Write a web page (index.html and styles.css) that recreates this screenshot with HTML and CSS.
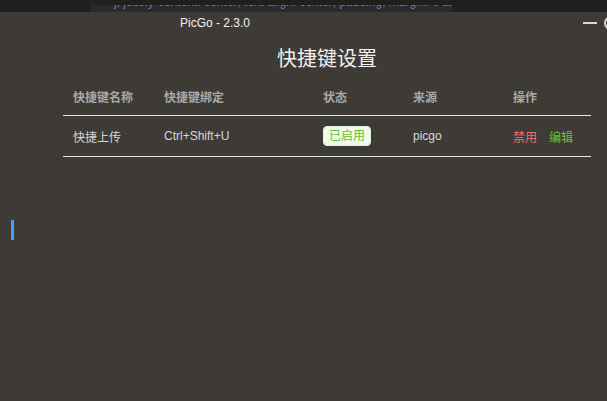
FILE: index.html
```html
<!DOCTYPE html>
<html lang="zh">
<head>
<meta charset="utf-8">
<link rel="stylesheet" href="styles.css">
</head>
<body>
<div class="topstrip">
  <div class="strip-left"></div>
  <div class="strip-box"><span class="strip-text">j, justify-content: center; text-align: center; padding; margin: 0 auto;</span></div>
</div>
<div class="window">
  <div class="titlebar">
    <span class="title">PicGo - 2.3.0</span>
    <span class="minimize"></span>
    <span class="close-ring"></span>
  </div>
  <div class="main">
    <div class="sidebar"><span class="active-bar"></span></div>
    <div class="content">
      <h1 class="heading">快捷键设置</h1>
      <div class="table">
        <div class="row head">
          <div class="cell c1">快捷键名称</div>
          <div class="cell c2">快捷键绑定</div>
          <div class="cell c3">状态</div>
          <div class="cell c4">来源</div>
          <div class="cell c5">操作</div>
        </div>
        <div class="row body">
          <div class="cell c1">快捷上传</div>
          <div class="cell c2">Ctrl+Shift+U</div>
          <div class="cell c3"><span class="tag">已启用</span></div>
          <div class="cell c4">picgo</div>
          <div class="cell c5"><span class="btn danger">禁用</span><span class="btn success">编辑</span></div>
        </div>
      </div>
    </div>
  </div>
</div>
</body>
</html>
```
FILE: styles.css
```css
* { box-sizing: border-box; }
html, body {
  margin: 0;
  padding: 0;
  width: 607px;
  height: 401px;
  overflow: hidden;
  background: #3e3b36;
  font-family: "Liberation Sans", "Noto Sans CJK SC", sans-serif;
}
.topstrip {
  height: 12px;
  background: #1f1f22;
  display: flex;
  overflow: hidden;
}
.strip-left {
  width: 92px;
  border-right: 1px solid #2a2a2e;
}
.strip-box {
  margin-top: 5px;
  width: 360px;
  height: 7px;
  background: #2a2a2e;
  overflow: hidden;
  position: relative;
}
.strip-text {
  position: absolute;
  left: 22px;
  top: -10px;
  font-size: 12px;
  color: #6f7f99;
  white-space: nowrap;
}
.window {
  height: 389px;
  display: flex;
  flex-direction: column;
}
.titlebar {
  height: 22px;
  position: relative;
  display: flex;
  align-items: center;
  padding-left: 180px;
}
.title {
  color: #f2f2f2;
  font-size: 12px;
}
.minimize {
  position: absolute;
  left: 583px;
  top: 10px;
  width: 14px;
  height: 2px;
  background: #d8d8d8;
}
.close-ring {
  position: absolute;
  left: 604px;
  top: 4px;
  width: 14px;
  height: 14px;
  border: 2px solid #d8d8d8;
  border-radius: 50%;
}
.main {
  flex: 1;
  display: flex;
}
.sidebar {
  width: 63px;
  padding-top: 186px;
  padding-left: 11px;
}
.active-bar {
  display: block;
  width: 3px;
  height: 20px;
  background: #409eff;
}
.content {
  width: 528px;
}
.heading {
  margin: 12px 0 0;
  height: 24px;
  line-height: 24px;
  text-align: center;
  font-weight: normal;
  font-size: 20px;
  color: #f2f2f2;
  font-family: "Noto Sans CJK SC", sans-serif;
}
.table {
  margin-top: 8px;
}
.row {
  display: flex;
  align-items: center;
  border-bottom: 1px solid #e6e6e6;
  font-size: 12px;
}
.row.head {
  height: 38px;
  font-weight: bold;
  color: #a9a9a9;
}
.row.body {
  height: 41px;
  color: #d6d6d6;
}
.cell { padding-left: 10px; }
.c1 { width: 91px; }
.c2 { width: 159px; }
.c3 { width: 90px; }
.c4 { width: 100px; }
.c5 { width: 88px; display: flex; gap: 12px; }
.tag {
  display: inline-block;
  height: 20px;
  line-height: 18px;
  padding: 0 5px;
  border: 1px solid #e1f3d8;
  border-radius: 4px;
  background: #f0f9eb;
  color: #67c23a;
  font-size: 12px;
}
.btn { font-size: 12px; }
.danger { color: #f56c6c; }
.success { color: #67c23a; }
```
